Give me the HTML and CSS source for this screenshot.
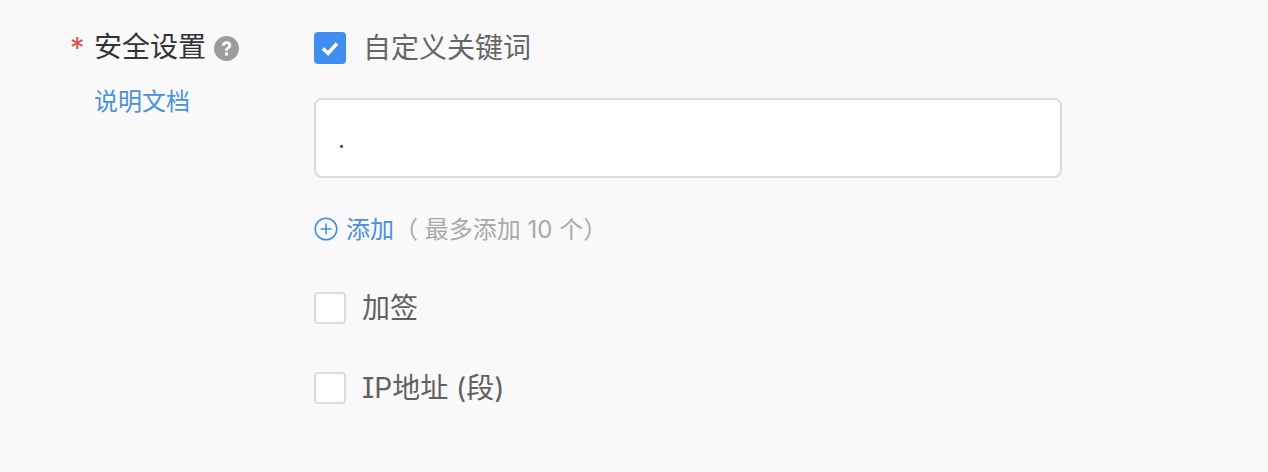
FILE: index.html
```html
<!DOCTYPE html>
<html lang="zh-CN">
  <head>
    <meta charset="UTF-8" />
    <title>安全设置</title>
    <link rel="stylesheet" href="styles.css">
  </head>
  <body>
    <div class="form-row">
      <div class="form-label">
        <div class="label-title">
          <span class="required">*</span>
          <span class="label-text">安全设置</span>
          <svg class="help-icon" viewBox="0 0 24 24" width="25" height="25">
            <circle cx="12" cy="12" r="12" fill="#9b9ba0" />
            <path d="M7.500 9.400c0-2.700 2-4.300 4.600-4.300 2.600 0 4.500 1.500 4.500 3.800 0 1.800-1.100 2.700-2.200 3.500-.8.600-1.100.9-1.100 1.800h-2.800c0-1.800.6-2.600 1.700-3.400.9-.7 1.500-1.100 1.500-1.800 0-.8-.7-1.300-1.600-1.300-1.100 0-1.700.6-1.800 1.700z" fill="#fff" />
            <rect x="10.500" y="15.700" width="2.900" height="3" fill="#fff" />
          </svg>
        </div>
        <a class="doc-link">说明文档</a>
      </div>
      <div class="form-body">
        <div class="check-row">
          <span class="checkbox checked">
            <svg viewBox="0 0 32 32" width="32" height="32">
              <path d="M9 16.500l5 5 9-10" fill="none" stroke="#fff" stroke-width="3.600" />
            </svg>
          </span>
          <span class="check-text">自定义关键词</span>
        </div>
        <div class="keyword-box">.</div>
        <div class="add-row">
          <svg class="add-icon" viewBox="0 0 24 24" width="24" height="24">
            <circle cx="12" cy="12" r="10.800" fill="none" stroke="#3d8ede" stroke-width="1.500" />
            <path d="M6.500 12h11M12 6.500v11" fill="none" stroke="#3d8ede" stroke-width="1.500" />
          </svg>
          <a class="add-link">添加</a>
          <span class="add-hint">（ 最多添加 10 个）</span>
        </div>
        <div class="check-row sign-row">
          <span class="checkbox"></span>
          <span class="check-text dark">加签</span>
        </div>
        <div class="check-row ip-row">
          <span class="checkbox"></span>
          <span class="check-text dark">IP地址 (段)</span>
        </div>
      </div>
    </div>
  </body>
</html>
```

FILE: styles.css
```css
html,
body {
  margin: 0;
  padding: 0;
}
body {
  width: 1268px;
  height: 472px;
  overflow: hidden;
  background-color: #f9f9f9;
  font-family: Inter, "Noto Sans CJK SC", sans-serif;
  font-feature-settings: "cv08";
}
.form-row {
  display: flex;
  padding-top: 32px;
}
.form-label {
  width: 314px;
  padding-left: 70px;
  box-sizing: border-box;
}
.label-title {
  display: flex;
  align-items: center;
  height: 32px;
}
.required {
  width: 24px;
  color: #d9534f;
  font-size: 29px;
  line-height: 32px;
  height: 32px;
}
.label-text {
  font-size: 28px;
  color: #333;
  line-height: 30px;
  height: 32px;
}
.help-icon {
  margin-left: 8px;
}
.doc-link {
  display: block;
  margin-top: 24px;
  margin-left: 24px;
  font-size: 24px;
  line-height: 28px;
  color: #4a90dc;
}
.form-body {
  width: 748px;
}
.check-row {
  display: flex;
  align-items: center;
  height: 32px;
}
.checkbox {
  width: 32px;
  height: 32px;
  box-sizing: border-box;
  border: 2px solid #dcdcdc;
  border-radius: 4px;
  background-color: #fff;
  flex-shrink: 0;
}
.checkbox.checked {
  border: none;
  background-color: #3f8ff0;
}
.checkbox svg {
  display: block;
}
.check-text {
  margin-left: 17px;
  font-size: 28px;
  line-height: 32px;
  height: 32px;
  color: #666;
}
.check-text.dark {
  margin-left: 16px;
  color: #606060;
}
.keyword-box {
  margin-top: 34px;
  height: 80px;
  box-sizing: border-box;
  border: 2px solid #dcdcdc;
  border-radius: 8px;
  background-color: #fff;
  padding: 24px 22px 0;
  font-size: 24px;
  line-height: 32px;
  color: #555;
}
.add-row {
  display: flex;
  align-items: center;
  margin-top: 36px;
  height: 28px;
}
.add-icon {
  display: block;
  margin-top: 1px;
}
.add-link {
  margin-left: 8px;
  margin-bottom: 2px;
  font-size: 24px;
  color: #4a90dc;
}
.add-hint {
  margin-bottom: 2px;
  font-size: 24px;
  color: #aaa;
}
.sign-row {
  margin-top: 50px;
}
.ip-row {
  margin-top: 48px;
}
```
